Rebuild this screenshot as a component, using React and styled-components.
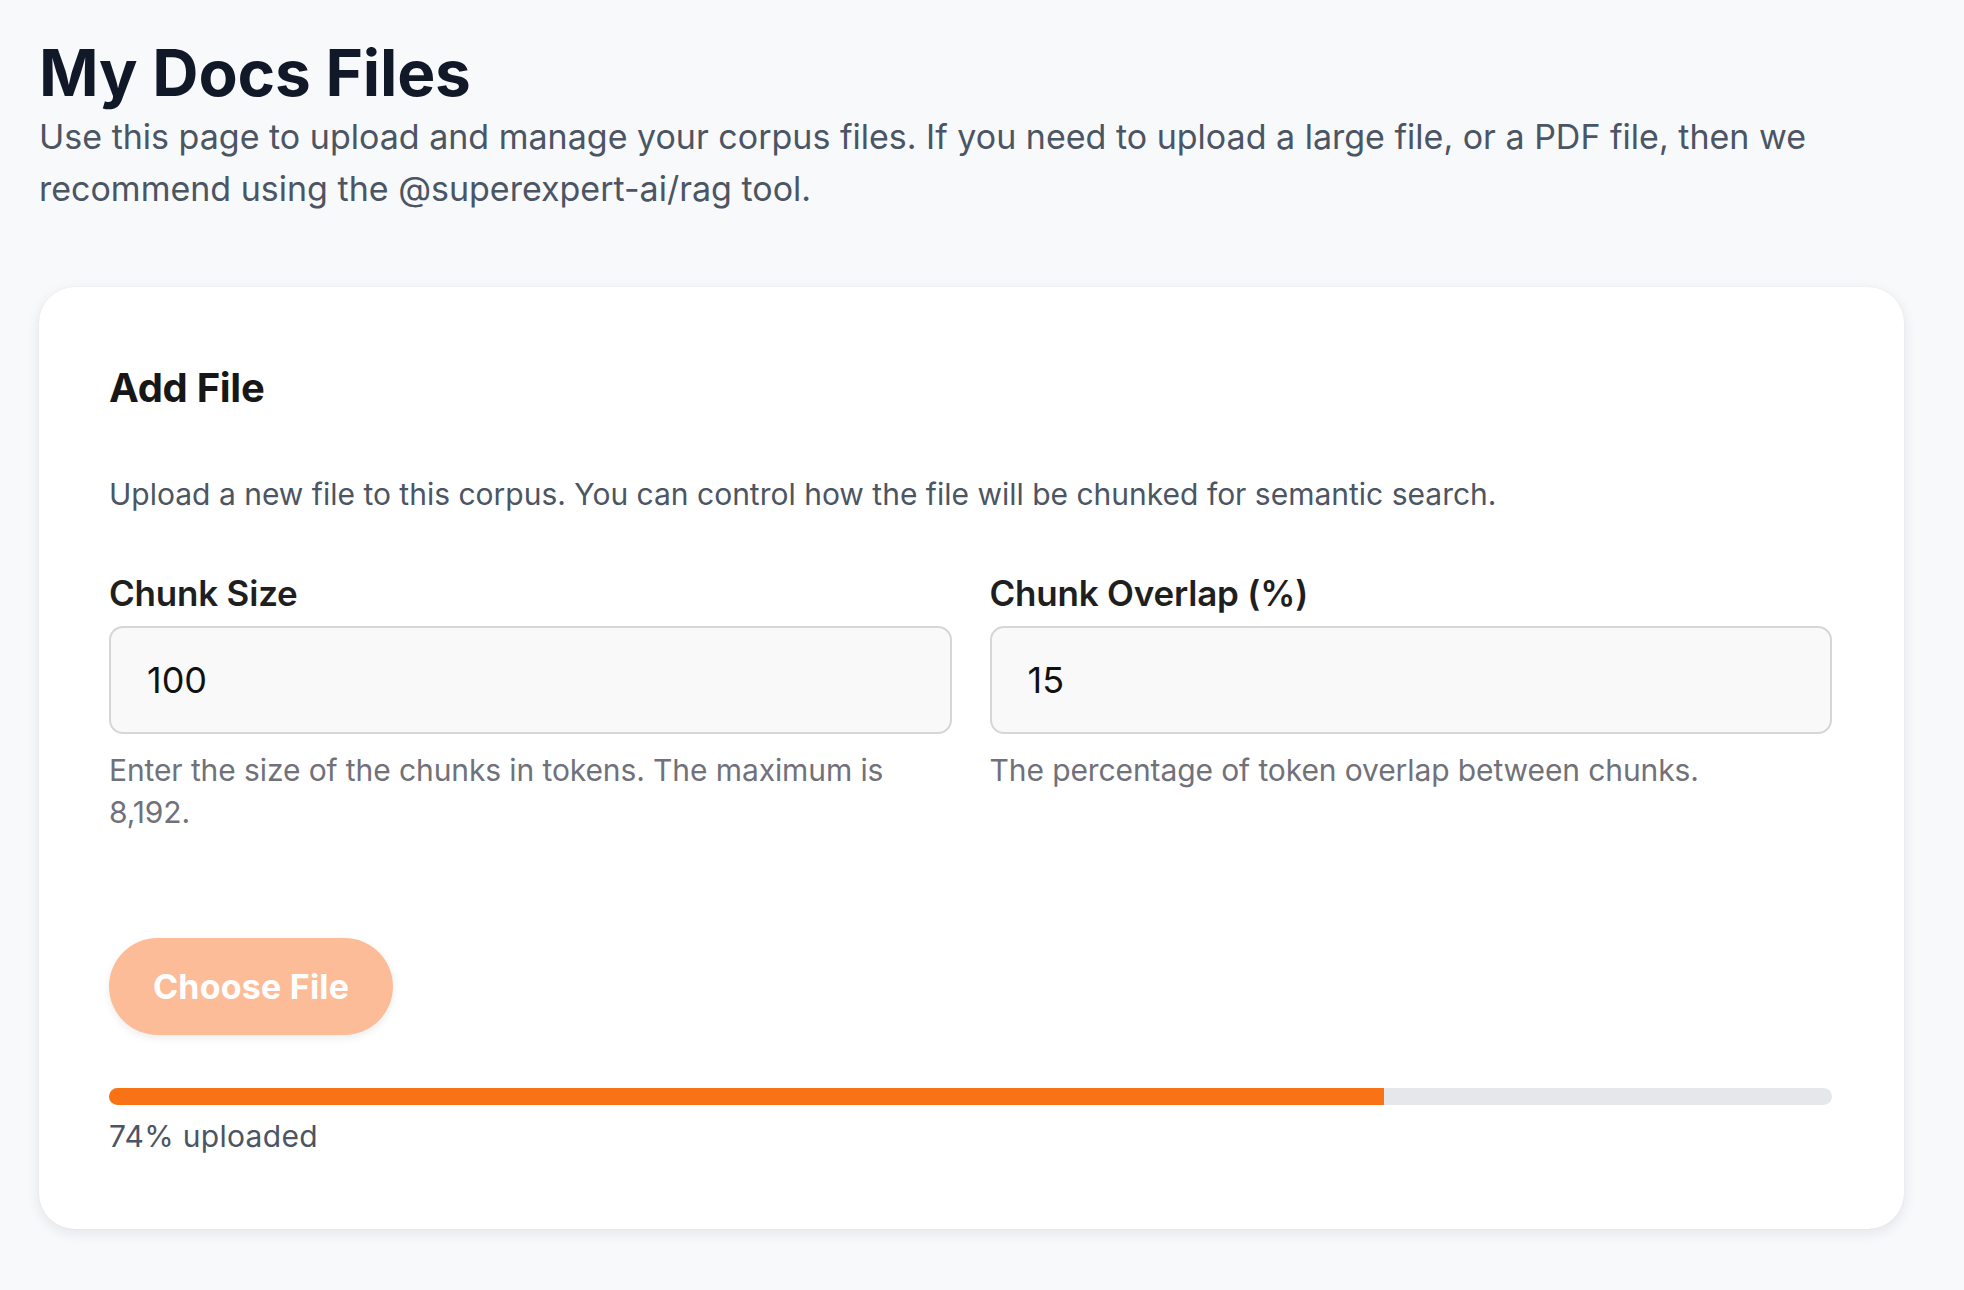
import React from 'react'
import styled, { createGlobalStyle } from 'styled-components'

const GlobalStyle = createGlobalStyle`
  html, body {
    margin: 0;
    padding: 0;
    background: #f8f9fb;
  }
  body {
    font-family: Inter, "Noto Sans", "Liberation Sans", sans-serif;
    -webkit-font-smoothing: antialiased;
  }
  * {
    box-sizing: border-box;
  }
`

const Page = styled.div`
  min-height: 1290px;
  padding: 35px 60px 40px 39px;
`

const Title = styled.h1`
  margin: 0;
  font-size: 64px;
  line-height: 76px;
  font-weight: 700;
  letter-spacing: -0.2px;
  color: #111827;
`

const Intro = styled.p`
  margin: 0;
  max-width: 1800px;
  font-size: 34px;
  line-height: 52px;
  color: #4b5563;
`

const Card = styled.section`
  margin-top: 72px;
  width: 1865px;
  background: #fff;
  border-radius: 36px;
  padding: 78px 72px 72px 70px;
  box-shadow: 0 4px 14px rgba(15, 23, 42, 0.09), 0 0 2px rgba(15, 23, 42, 0.05);
`

const CardTitle = styled.h2`
  margin: 0;
  font-size: 40px;
  line-height: 46px;
  font-weight: 700;
  letter-spacing: -0.3px;
  color: #171717;
`

const CardText = styled.p`
  margin: 62px 0 0;
  font-size: 30px;
  line-height: 42px;
  color: #4b5563;
`

const Fields = styled.div`
  margin-top: 58px;
  display: grid;
  grid-template-columns: 1fr 1fr;
  column-gap: 38px;
`

const Field = styled.div`
  display: flex;
  flex-direction: column;
`

const Label = styled.label`
  font-size: 35px;
  line-height: 40px;
  font-weight: 600;
  letter-spacing: -0.2px;
  color: #1f1f1f;
`

const Input = styled.input`
  margin-top: 13px;
  height: 108px;
  width: 100%;
  padding: 0 36px;
  border: 2px solid #d6d6d6;
  border-radius: 14px;
  background: #f9f9f9;
  font-family: Inter, "Liberation Sans", sans-serif;
  font-size: 36px;
  color: #111;
  outline: none;
`

const Help = styled.p`
  margin: 15px 0 0;
  font-size: 30px;
  line-height: 42px;
  letter-spacing: -0.1px;
  color: #71717a;
`

const ChooseButton = styled.button`
  align-self: flex-start;
  margin-top: 105px;
  height: 97px;
  padding: 0 44px;
  border: none;
  border-radius: 999px;
  background: #fdbc98;
  color: #fff;
  font-family: Inter, "Liberation Sans", sans-serif;
  font-size: 34px;
  font-weight: 700;
  letter-spacing: 0.2px;
  box-shadow: 0 3px 8px rgba(0, 0, 0, 0.08);
  cursor: pointer;
`

const Track = styled.div`
  margin-top: 53px;
  height: 17px;
  width: 100%;
  background: #e5e7eb;
  border-radius: 999px;
  overflow: hidden;
`

const Fill = styled.div`
  height: 100%;
  background: #f97316;
`

const Status = styled.p`
  margin: 10px 0 0;
  font-size: 30px;
  line-height: 42px;
  letter-spacing: 0.3px;
  color: #4b5563;
`

export default function App () {
  const progress = 74
  return (
    <>
      <GlobalStyle />
      <Page>
        <Title>My Docs Files</Title>
        <Intro>
          Use this page to upload and manage your corpus files. If you need to upload a large file, or a PDF file, then we
          recommend using the @superexpert-ai/rag tool.
        </Intro>
        <Card>
          <CardTitle>Add File</CardTitle>
          <CardText>
            Upload a new file to this corpus. You can control how the file will be chunked for semantic search.
          </CardText>
          <Fields>
            <Field>
              <Label htmlFor='chunk-size'>Chunk Size</Label>
              <Input id='chunk-size' defaultValue='100' />
              <Help>Enter the size of the chunks in tokens. The maximum is 8,192.</Help>
            </Field>
            <Field>
              <Label htmlFor='chunk-overlap'>Chunk Overlap (%)</Label>
              <Input id='chunk-overlap' defaultValue='15' />
              <Help>The percentage of token overlap between chunks.</Help>
            </Field>
          </Fields>
          <ChooseButton>Choose File</ChooseButton>
          <Track>
            <Fill style={{ width: `${progress}%` }} />
          </Track>
          <Status>{progress}% uploaded</Status>
        </Card>
      </Page>
    </>
  )
}
